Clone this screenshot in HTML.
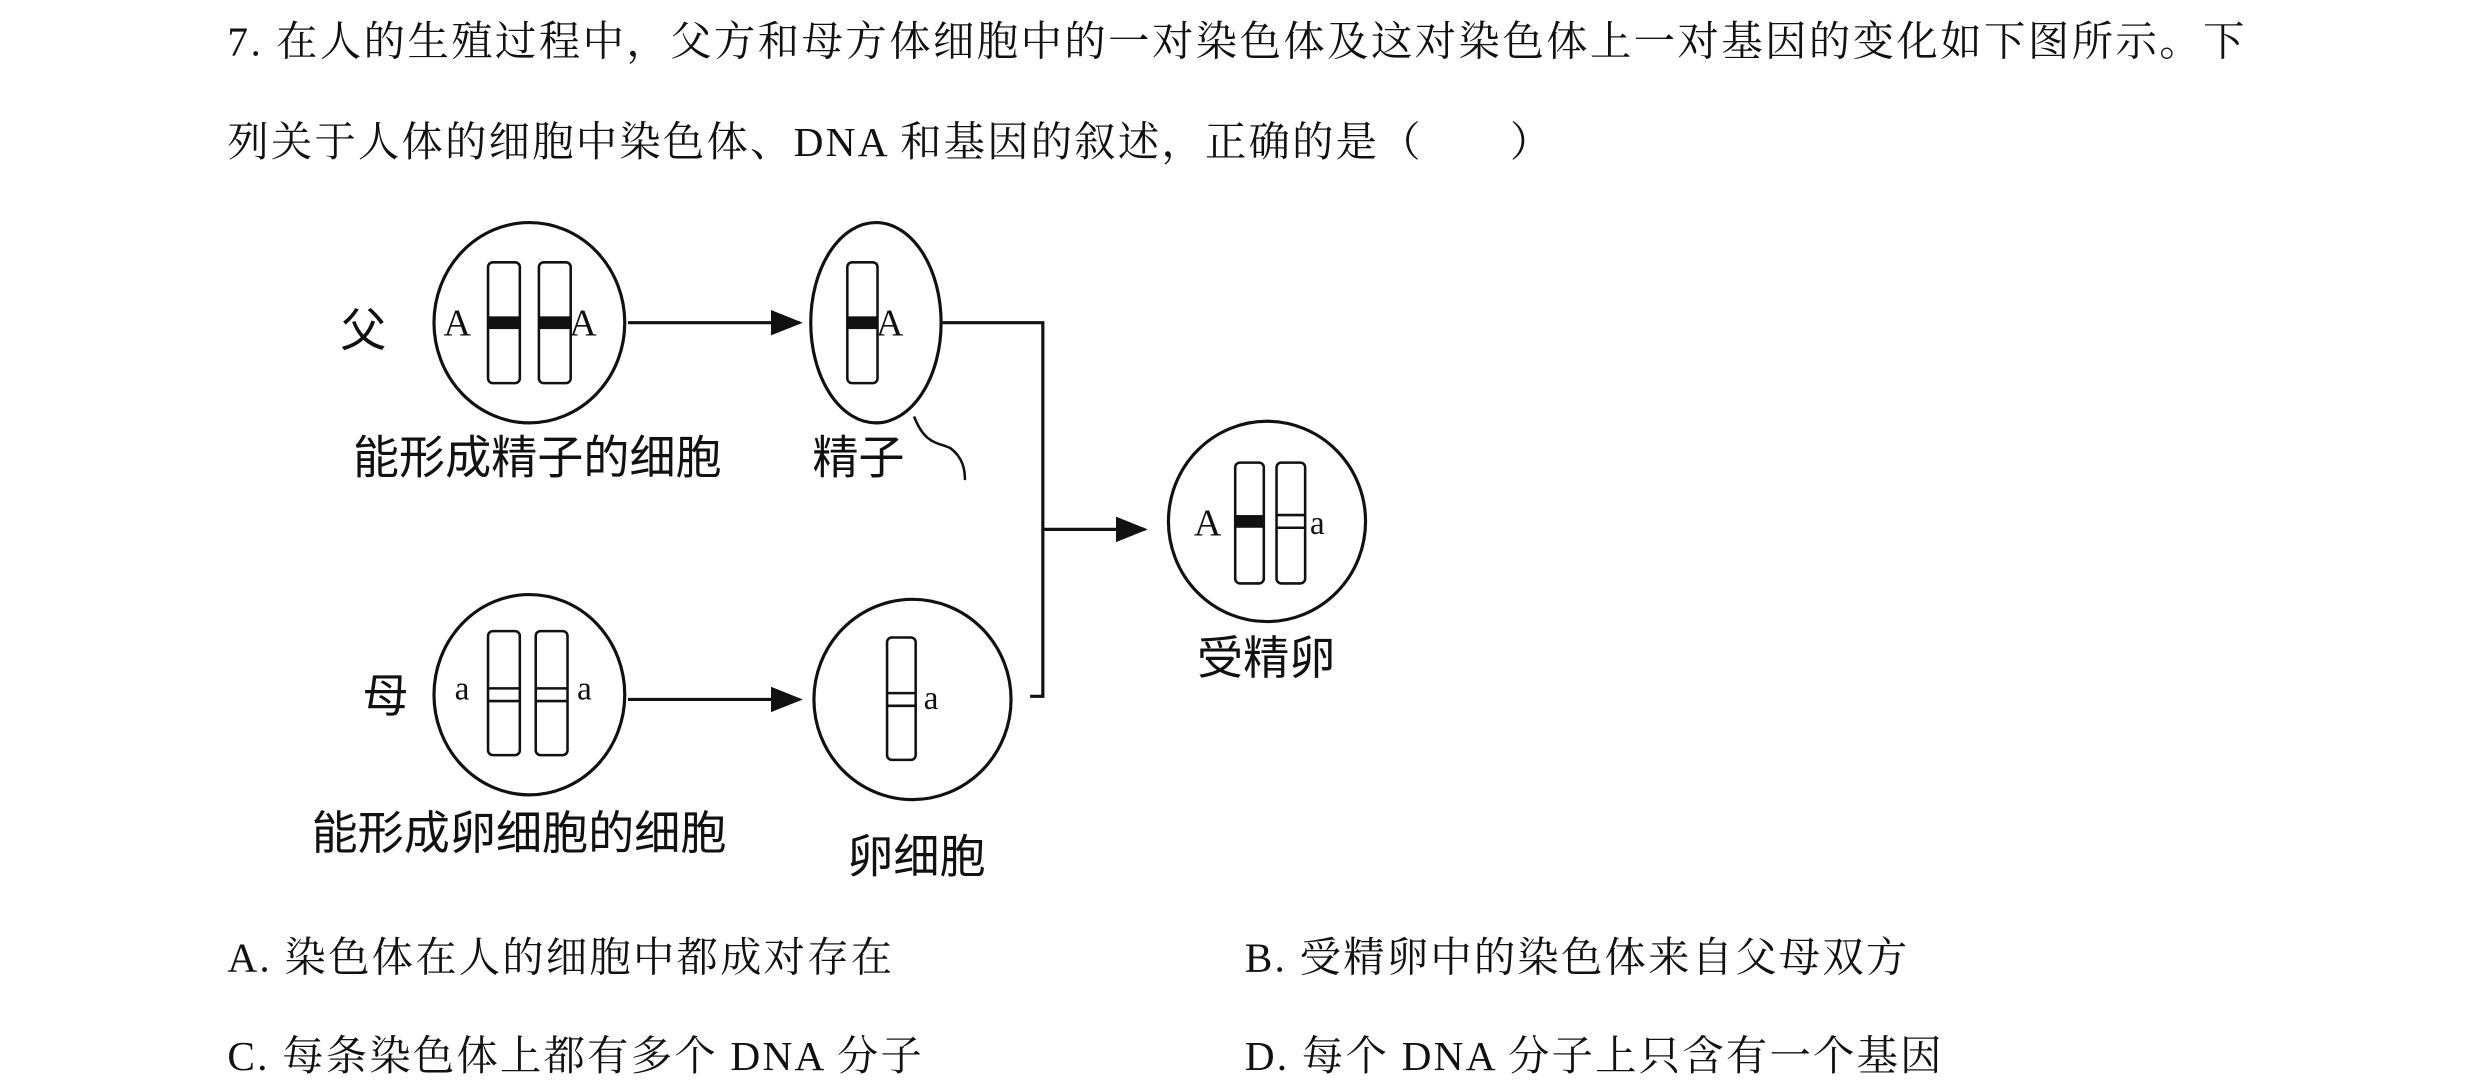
<!DOCTYPE html>
<html><head><meta charset="utf-8"><style>
html,body{margin:0;padding:0;background:#fff;width:2480px;height:1088px;overflow:hidden}
#w{position:absolute;left:0;top:0;width:1560px;height:685px;transform:scale(1.5897);transform-origin:0 0}
.t{position:absolute;font-family:"Liberation Serif","Noto Serif CJK SC",serif;font-size:26px;color:#111;white-space:nowrap;line-height:30px;letter-spacing:1.4px}
.cj{font-family:"Liberation Sans","Noto Sans CJK SC",sans-serif}
.sf{font-family:"Liberation Serif",serif}
</style></head><body><div id="w">
<div class="t" style="left:143px;top:12px;letter-spacing:1.55px">7. 在人的生殖过程中，父方和母方体细胞中的一对染色体及这对染色体上一对基因的变化如下图所示。下</div>
<div class="t" style="left:143px;top:75px">列关于人体的细胞中染色体、DNA 和基因的叙述，正确的是（　　）</div>
<div class="t" style="left:143px;top:588px;letter-spacing:1.4px">A. 染色体在人的细胞中都成对存在</div>
<div class="t" style="left:783px;top:588px;letter-spacing:1.4px">B. 受精卵中的染色体来自父母双方</div>
<div class="t" style="left:143px;top:650px;letter-spacing:1.4px">C. 每条染色体上都有多个 DNA 分子</div>
<div class="t" style="left:783px;top:650px;letter-spacing:1.4px">D. 每个 DNA 分子上只含有一个基因</div>
<svg width="1560" height="685" style="position:absolute;left:0;top:0" fill="none" stroke="#111" stroke-width="2">
<defs><marker id="ar" markerWidth="10" markerHeight="10" refX="9" refY="5" orient="auto"><path d="M0,1 L10,5 L0,9z" fill="#111" stroke="none"/></marker></defs>
<g font-size="29" fill="#111" stroke="none" class="cj">
<text class="cj" x="214" y="218">父</text><text class="cj" x="228" y="448">母</text>
<text class="cj" x="222" y="298">能形成精子的细胞</text><text class="cj" x="511" y="298">精子</text>
<text class="cj" x="196" y="534">能形成卵细胞的细胞</text><text class="cj" x="533" y="549">卵细胞</text>
<text class="cj" x="753" y="424">受精卵</text>
</g>
<g font-size="24" fill="#111" stroke="none">
<text class="sf" x="279" y="211">A</text><text class="sf" x="358" y="211">A</text><text class="sf" x="551" y="211">A</text><text class="sf" x="751" y="337">A</text>
<text class="sf" x="286" y="440" font-size="21">a</text><text class="sf" x="363" y="440" font-size="21">a</text><text class="sf" x="581" y="446" font-size="21">a</text><text class="sf" x="824" y="336" font-size="21">a</text>
</g>
<ellipse cx="333" cy="203" rx="60" ry="63"/>
<ellipse cx="551" cy="203" rx="41" ry="63"/>
<ellipse cx="797" cy="328" rx="62" ry="63"/>
<ellipse cx="333" cy="437" rx="60" ry="63"/>
<ellipse cx="574" cy="440" rx="62" ry="63"/>
<g stroke-width="1.6">
<rect x="307" y="165" width="20" height="76" rx="3"/><rect x="339" y="165" width="20" height="76" rx="3"/>
<rect x="533" y="165" width="19" height="76" rx="3"/>
<rect x="777" y="291" width="18" height="76" rx="3"/><rect x="803" y="291" width="18" height="76" rx="3"/>
<rect x="307" y="397" width="20" height="78" rx="3"/><rect x="337" y="397" width="20" height="78" rx="3"/>
<rect x="558" y="401" width="18" height="77" rx="3"/>
<path d="M307 433H327M307 441H327M337 433H357M337 441H357M558 436H576M558 444H576M803 324H821M803 332H821"/>
</g>
<g fill="#111" stroke="none">
<rect x="307" y="199" width="20" height="8"/><rect x="339" y="199" width="20" height="8"/>
<rect x="533" y="199" width="19" height="8"/><rect x="777" y="324" width="18" height="8"/>
</g>
<path d="M395 203H503" marker-end="url(#ar)"/>
<path d="M395 440H503" marker-end="url(#ar)"/>
<path d="M593 203H656V438H648"/>
<path d="M656 333H720" marker-end="url(#ar)"/>
<path d="M575 262C582 280 590 278 598 282C606 288 607 296 607 302" stroke-width="1.6"/>
</svg>
</div></body></html>
